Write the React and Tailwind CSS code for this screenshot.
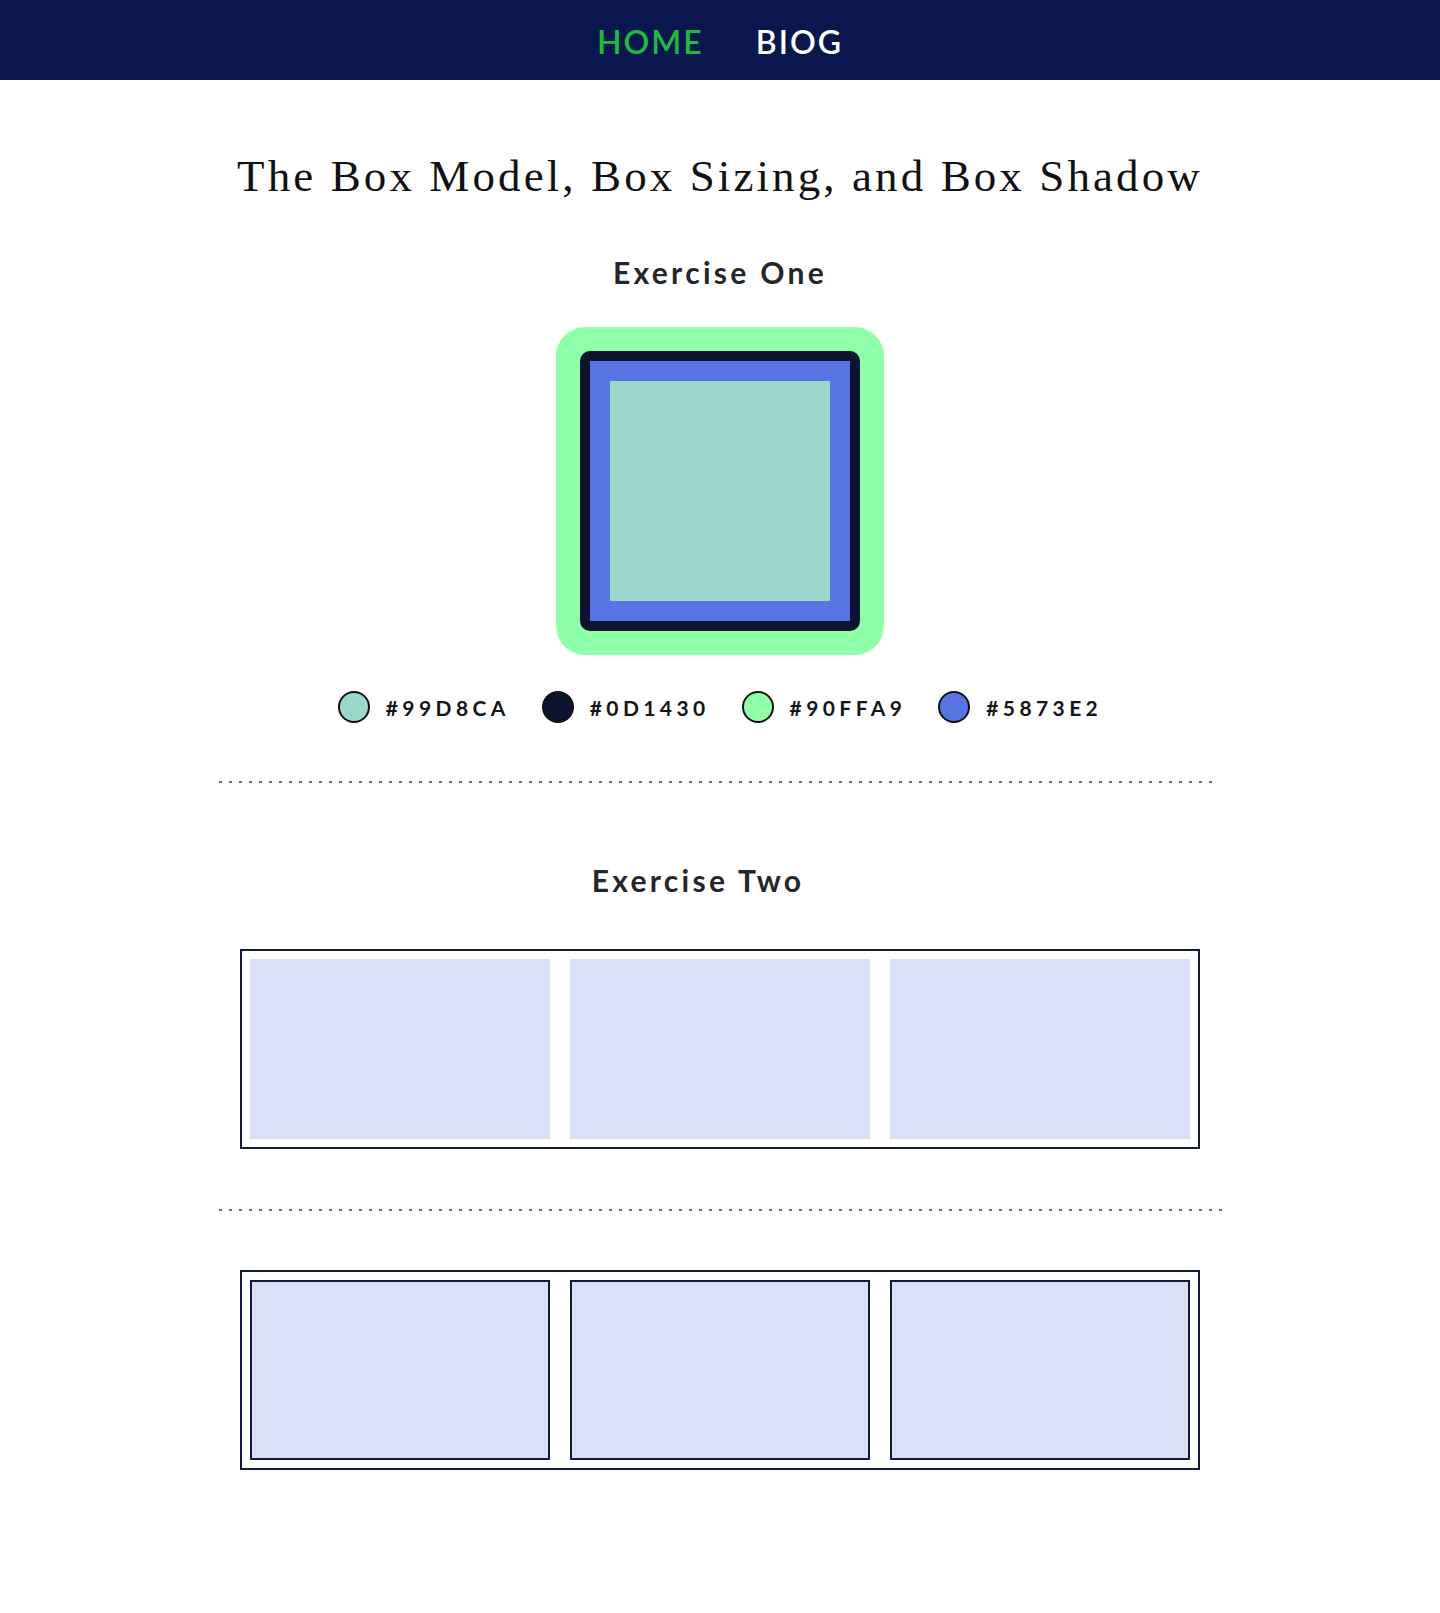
import React from "react";

const swatches = [
  { color: "bg-[#99D8CA]", label: "#99D8CA" },
  { color: "bg-[#0D1430]", label: "#0D1430" },
  { color: "bg-[#90FFA9]", label: "#90FFA9" },
  { color: "bg-[#5873E2]", label: "#5873E2" },
];

function Dotted({ width }) {
  return (
    <div
      className={`self-start ml-[219px] h-[2px] ${width} bg-[linear-gradient(to_right,#6a6a6a_0_3px,transparent_3px_10px)] bg-[length:10px_2px] bg-repeat-x`}
    />
  );
}

function Row({ bordered }) {
  const item = bordered
    ? "w-[300px] h-[180px] bg-[#DBDFF8] border-2 border-[#121A3D] box-border"
    : "w-[300px] h-[180px] bg-[#DBDFF8]";
  return (
    <div className="box-border w-[960px] border-2 border-[#121A3D] p-[8px] flex gap-[20px]">
      <div className={item} />
      <div className={item} />
      <div className={item} />
    </div>
  );
}

export default function App() {
  return (
    <div className="min-h-[1613px] bg-white font-['Lato',sans-serif]">
      <header className="h-[80px] pt-[3px] bg-[#0A174E] flex items-center justify-center gap-[52px]">
        <a className="text-[32px] leading-[40px] font-semibold tracking-[2px] text-[#1FB944]">HOME</a>
        <a className="text-[32px] leading-[40px] font-semibold tracking-[2px] text-white">BIOG</a>
      </header>

      <main className="flex flex-col items-center">
        <h1 className="mt-[70px] font-['Liberation_Serif',serif] text-[45px] leading-[52px] tracking-[3.1px] text-[#111]">
          The Box Model, Box Sizing, and Box Shadow
        </h1>

        <h2 className="mt-[52px] text-[30px] leading-[36px] font-bold tracking-[3.3px] text-[#25262B]">
          Exercise One
        </h2>

        <div className="mt-[61px] box-border w-[280px] h-[280px] p-[20px] border-[10px] border-[#0D1430] rounded-[10px] bg-[#5873E2] shadow-[0_0_0_24px_#90FFA9]">
          <div className="w-full h-full bg-[#99D8CA]" />
        </div>

        <div className="mt-[60px] flex items-center gap-[32px]">
          {swatches.map((s) => (
            <div key={s.label} className="flex items-center gap-[16px]">
              <span className={`box-border w-[32px] h-[32px] rounded-full border-2 border-[#111] ${s.color}`} />
              <span className="text-[21px] leading-[31px] font-bold tracking-[4.4px] text-[#151515]">{s.label}</span>
            </div>
          ))}
        </div>

        <div className="mt-[58px] self-stretch flex">
          <Dotted width="w-[998px]" />
        </div>

        <h2 className="mt-[79px] pr-[44px] text-[30px] leading-[36px] font-bold tracking-[3.3px] text-[#25262B]">
          Exercise Two
        </h2>

        <div className="mt-[51px]">
          <Row bordered={false} />
        </div>

        <div className="mt-[60px] self-stretch flex">
          <Dotted width="w-[1008px]" />
        </div>

        <div className="mt-[59px]">
          <Row bordered={true} />
        </div>
      </main>
    </div>
  );
}
